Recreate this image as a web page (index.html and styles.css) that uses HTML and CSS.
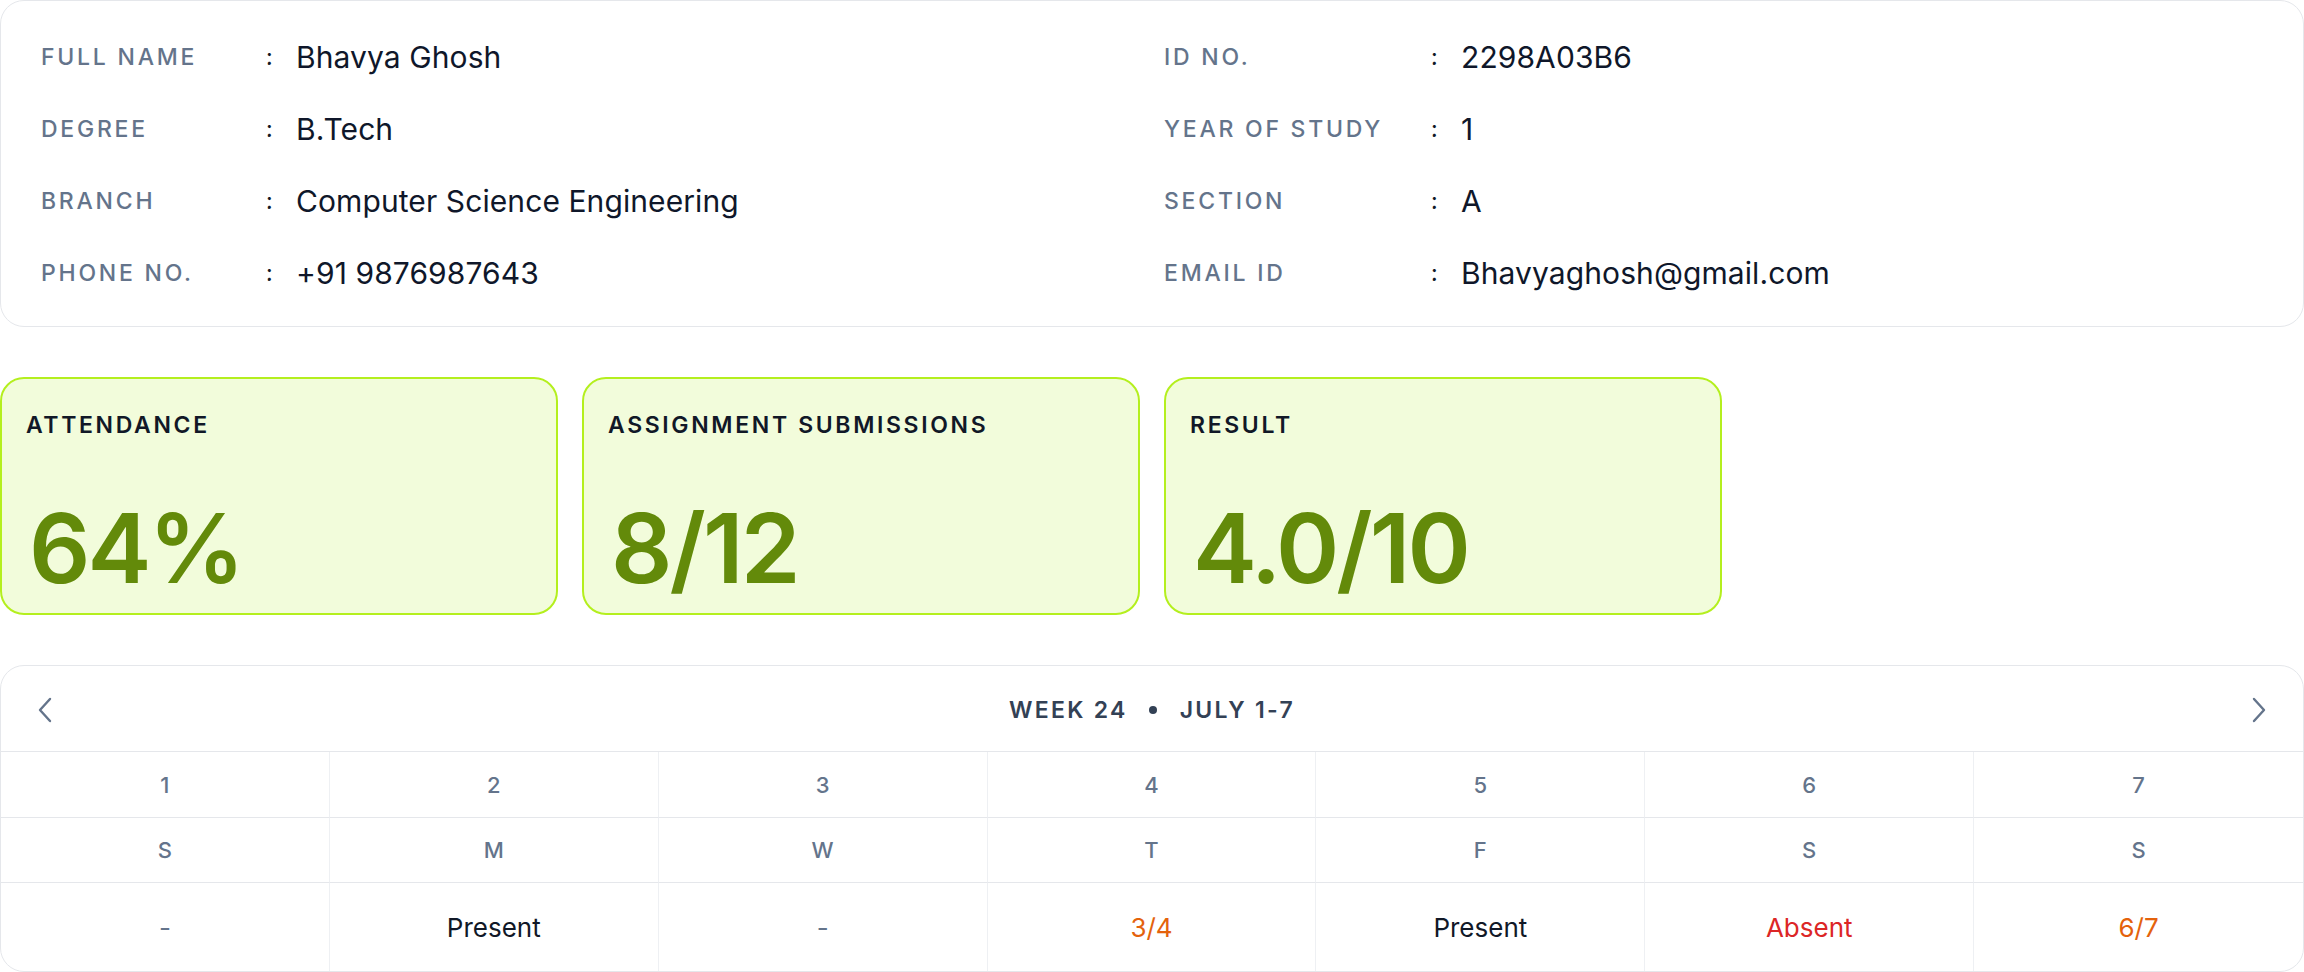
FILE: index.html
```html
<!DOCTYPE html>
<html lang="en">
<head>
<meta charset="utf-8">
<title>Student Overview</title>
<link rel="stylesheet" href="styles.css">
</head>
<body>
<main class="page">
  <section class="info-card">
    <div class="info-col info-col--left">
      <div class="info-row"><span class="info-label">Full Name</span><span class="info-colon">:</span><span class="info-value">Bhavya Ghosh</span></div>
      <div class="info-row"><span class="info-label">Degree</span><span class="info-colon">:</span><span class="info-value">B.Tech</span></div>
      <div class="info-row"><span class="info-label">Branch</span><span class="info-colon">:</span><span class="info-value">Computer Science Engineering</span></div>
      <div class="info-row"><span class="info-label">Phone No.</span><span class="info-colon">:</span><span class="info-value">+91 9876987643</span></div>
    </div>
    <div class="info-col info-col--right">
      <div class="info-row"><span class="info-label">ID No.</span><span class="info-colon">:</span><span class="info-value">2298A03B6</span></div>
      <div class="info-row"><span class="info-label">Year of Study</span><span class="info-colon">:</span><span class="info-value">1</span></div>
      <div class="info-row"><span class="info-label">Section</span><span class="info-colon">:</span><span class="info-value">A</span></div>
      <div class="info-row"><span class="info-label">Email ID</span><span class="info-colon">:</span><span class="info-value">Bhavyaghosh@gmail.com</span></div>
    </div>
  </section>

  <section class="stats">
    <div class="stat-card">
      <div class="stat-title">Attendance</div>
      <div class="stat-value">64%</div>
    </div>
    <div class="stat-card">
      <div class="stat-title">Assignment Submissions</div>
      <div class="stat-value">8/12</div>
    </div>
    <div class="stat-card">
      <div class="stat-title">Result</div>
      <div class="stat-value">4.0/10</div>
    </div>
  </section>

  <section class="calendar">
    <div class="cal-header">
      <button class="cal-nav" aria-label="Previous week">
        <svg width="16" height="26" viewBox="0 0 16 26"><path d="M13 2 L3 13 L13 24" fill="none" stroke="#64748b" stroke-width="2.4" stroke-linecap="round" stroke-linejoin="round"/></svg>
      </button>
      <div class="cal-title">Week 24<span class="cal-dot"></span>July 1-7</div>
      <button class="cal-nav" aria-label="Next week">
        <svg width="16" height="26" viewBox="0 0 16 26"><path d="M3 2 L13 13 L3 24" fill="none" stroke="#64748b" stroke-width="2.4" stroke-linecap="round" stroke-linejoin="round"/></svg>
      </button>
    </div>
    <div class="cal-grid">
      <div class="cell cell--num">1</div>
      <div class="cell cell--num">2</div>
      <div class="cell cell--num">3</div>
      <div class="cell cell--num">4</div>
      <div class="cell cell--num">5</div>
      <div class="cell cell--num">6</div>
      <div class="cell cell--num">7</div>

      <div class="cell cell--day">S</div>
      <div class="cell cell--day">M</div>
      <div class="cell cell--day">W</div>
      <div class="cell cell--day">T</div>
      <div class="cell cell--day">F</div>
      <div class="cell cell--day">S</div>
      <div class="cell cell--day">S</div>

      <div class="cell cell--status is-none">-</div>
      <div class="cell cell--status is-present">Present</div>
      <div class="cell cell--status is-none">-</div>
      <div class="cell cell--status is-partial">3/4</div>
      <div class="cell cell--status is-present">Present</div>
      <div class="cell cell--status is-absent">Absent</div>
      <div class="cell cell--status is-partial">6/7</div>
    </div>
  </section>
</main>
</body>
</html>
```
FILE: styles.css
```css
* { box-sizing: border-box; }

html, body {
  margin: 0;
  padding: 0;
  background: #ffffff;
}

body {
  font-family: Inter, "Noto Sans", "Liberation Sans", sans-serif;
  color: #111827;
}

.page {
  width: 2304px;
  height: 972px;
  display: flex;
  flex-direction: column;
  gap: 50px;
}

/* ---------- info card ---------- */
.info-card {
  height: 327px;
  border: 1px solid #e5e7eb;
  border-radius: 24px;
  padding: 38px 40px 0 40px;
  display: grid;
  grid-template-columns: 1fr 1fr;
  column-gap: 24px;
}

.info-col {
  display: flex;
  flex-direction: column;
  gap: 40px;
}

.info-row {
  display: grid;
  align-items: center;
  height: 32px;
}

.info-col--left .info-row { grid-template-columns: 225px 30px 1fr; }
.info-col--right .info-row { grid-template-columns: 267px 30px 1fr; }

.info-label {
  font-size: 23px;
  font-weight: 500;
  letter-spacing: 0.12em;
  text-transform: uppercase;
  color: #64748b;
}

.info-colon {
  font-size: 22px;
  font-weight: 500;
  color: #111827;
}

.info-value {
  font-size: 30px;
  font-weight: 400;
  color: #0f172a;
  letter-spacing: 0.003em;
}

/* ---------- stat cards ---------- */
.stats {
  display: grid;
  grid-template-columns: repeat(4, 1fr);
  column-gap: 24px;
}

.stat-card {
  height: 238px;
  background: #f2fcdb;
  border: 2px solid #b4ef1e;
  border-radius: 24px;
  padding: 34px 24px 0 24px;
}

.stat-title {
  font-size: 23px;
  line-height: 24px;
  font-weight: 600;
  letter-spacing: 0.115em;
  text-transform: uppercase;
  color: #111827;
}

.stat-value {
  margin-top: 63px;
  font-size: 96px;
  line-height: 96px;
  font-weight: 600;
  letter-spacing: -0.03em;
  color: #638a0a;
  padding-left: 3px;
}

/* ---------- calendar ---------- */
.calendar {
  height: 307px;
  border: 1px solid #e5e7eb;
  border-radius: 24px;
  overflow: hidden;
  display: flex;
  flex-direction: column;
}

.cal-header {
  height: 86px;
  flex: none;
  border-bottom: 1px solid #e5e7eb;
  display: flex;
  align-items: center;
  justify-content: space-between;
  padding: 2px 28px 0 28px;
}

.cal-nav {
  border: 0;
  background: none;
  padding: 0;
  width: 32px;
  height: 32px;
  display: flex;
  align-items: center;
  justify-content: center;
}

.cal-title {
  font-size: 23px;
  font-weight: 600;
  letter-spacing: 0.1em;
  text-transform: uppercase;
  color: #334155;
  display: flex;
  align-items: center;
}

.cal-dot {
  width: 8px;
  height: 8px;
  border-radius: 50%;
  background: #334155;
  margin: 0 23px 0 21px;
}

.cal-grid {
  flex: 1;
  display: grid;
  grid-template-columns: repeat(7, 1fr);
  grid-template-rows: 66px 65px 1fr;
}

.cell {
  display: flex;
  align-items: center;
  justify-content: center;
  border-right: 1px solid #eef0f3;
  border-bottom: 1px solid #e5e7eb;
}

.cell:nth-child(7n) { border-right: 0; }

.cell--num,
.cell--day {
  font-size: 22px;
  font-weight: 500;
  color: #64748b;
}

.cell--status {
  border-bottom: 0;
  font-size: 26px;
  font-weight: 400;
  padding-top: 1px;
}

.is-none { color: #64748b; }
.is-present { color: #111827; }
.is-partial { color: #e4620c; }
.is-absent { color: #dc2626; }
```
